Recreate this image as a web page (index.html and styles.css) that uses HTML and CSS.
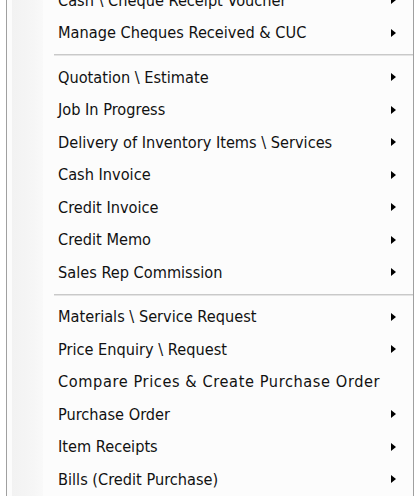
FILE: index.html
```html
<!DOCTYPE html>
<html lang="en">
<head>
    <meta charset="UTF-8">
    <meta name="viewport" content="width=device-width, initial-scale=1.0">
    <title>Sales Menu</title>
    <link rel="stylesheet" href="styles.css">
</head>
<body>
    <div class="menu">
        <div class="item sub"><span>Cash \ Cheque Receipt Voucher</span></div>
        <div class="item sub"><span>Manage Cheques Received &amp; CUC</span></div>
        <div class="separator"></div>
        <div class="item sub"><span>Quotation \ Estimate</span></div>
        <div class="item sub"><span>Job In Progress</span></div>
        <div class="item sub"><span>Delivery of Inventory Items \ Services</span></div>
        <div class="item sub"><span>Cash Invoice</span></div>
        <div class="item sub"><span>Credit Invoice</span></div>
        <div class="item sub"><span>Credit Memo</span></div>
        <div class="item sub"><span>Sales Rep Commission</span></div>
        <div class="separator"></div>
        <div class="item sub"><span>Materials \ Service Request</span></div>
        <div class="item sub"><span>Price Enquiry \ Request</span></div>
        <div class="item wide"><span>Compare Prices &amp; Create Purchase Order</span></div>
        <div class="item sub"><span>Purchase Order</span></div>
        <div class="item sub"><span>Item Receipts</span></div>
        <div class="item sub"><span>Bills (Credit Purchase)</span></div>
    </div>
</body>
</html>
```
FILE: styles.css
```css
body {
    margin: 0;
    padding: 0;
    background-color: #ffffff;
    font-family: "DejaVu Sans Condensed", "DejaVu Sans", Verdana, sans-serif;
    height: 500px;
    overflow: hidden;
}
.menu {
    margin: -16px 0 0 6px;
    width: 406px;
    border-left: 1px solid #a0a0a0;
    border-right: 1px solid #a0a0a0;
    background-color: #fcfcfc;
    background-image: linear-gradient(to right, #f2f2f2, #f6f6f6 70%, #f9f9f9);
    background-size: 31px 100%;
    background-position: 5px 0;
    background-repeat: no-repeat;
}
.item {
    height: 32.5px;
    display: flex;
    align-items: center;
    padding-left: 51px;
    padding-right: 17px;
    font-size: 16.2px;
    color: #111;
}
.item span {
    flex: 1;
}
.wide span {
    letter-spacing: 0.6px;
}
.sub::after {
    content: "";
    width: 0;
    height: 0;
    border-top: 4.5px solid transparent;
    border-bottom: 4.5px solid transparent;
    border-left: 5px solid #000;
}
.separator {
    margin: 5px 0 5px 47px;
    height: 0;
    border-top: 1px solid #c9c9c9;
    border-bottom: 1px solid #e4e4e4;
}
```
